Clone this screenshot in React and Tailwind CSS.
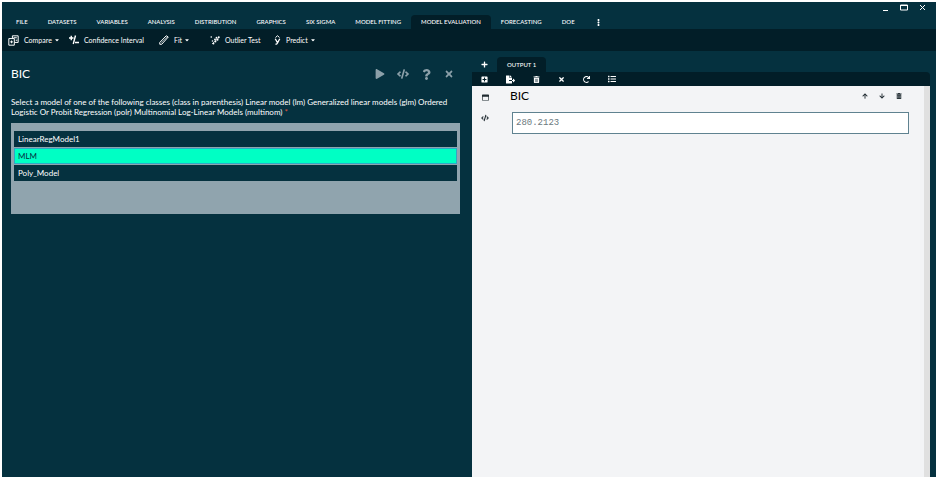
import React, { useState } from 'react';
import {
  FaPlay,
  FaCode,
  FaQuestion,
  FaTimes,
  FaPlus,
  FaPlusSquare,
  FaFileExport,
  FaTrashAlt,
  FaRedo,
  FaList,
  FaRegWindowMaximize,
  FaArrowUp,
  FaArrowDown,
  FaEllipsisV,
  FaCaretDown,
} from 'react-icons/fa';

const menus = [
  'FILE',
  'DATASETS',
  'VARIABLES',
  'ANALYSIS',
  'DISTRIBUTION',
  'GRAPHICS',
  'SIX SIGMA',
  'MODEL FITTING',
  'MODEL EVALUATION',
  'FORECASTING',
  'DOE',
];

const models = ['LinearRegModel1', 'MLM', 'Poly_Model'];

const CompareIcon = () => (
  <svg viewBox="0 0 20 20" className="size-[11px]" fill="none" stroke="currentColor" strokeWidth="1.8">
    <path d="M8 6V1.5h10.5v12H12" />
    <path d="M1.5 6.5h10v12h-10z" />
    <path d="M4 12.5h5M6.5 10v5M10 5h6M14 9.5h3" />
  </svg>
);

const IntervalIcon = () => (
  <svg viewBox="0 0 20 20" className="size-[10px]" fill="none" stroke="currentColor" strokeWidth="2.8">
    <path d="M0 6h9M4.5 1.5v9M13 1L8.5 18M12 15h8" />
  </svg>
);

const FitIcon = () => (
  <svg viewBox="0 0 20 20" className="size-[10px]" fill="none" stroke="currentColor" strokeWidth="2">
    <path d="M1.5 15L14.500 1.500 18.500 4 5.500 18.500H1.500z" />
    <path d="M4.500 15.500L16 4" strokeWidth="1" />
  </svg>
);

const OutlierIcon = () => (
  <svg viewBox="0 0 20 20" className="size-[10px]" fill="currentColor">
    <circle cx="2.5" cy="4" r="1.6" />
    <circle cx="10" cy="9" r="1.8" />
    <circle cx="13" cy="5.5" r="1.8" />
    <circle cx="17.500" cy="4.500" r="2" />
    <circle cx="15" cy="9.500" r="2" />
    <circle cx="11" cy="13" r="1.800" />
    <circle cx="5" cy="12" r="1.600" />
    <circle cx="7" cy="17" r="1.800" />
    <path d="M4 18L18 5" stroke="currentColor" strokeWidth="1.500" />
  </svg>
);

const PredictIcon = () => (
  <svg viewBox="0 0 14 20" className="h-[10px] w-[7px]" fill="none" stroke="currentColor" strokeWidth="2.6">
    <path d="M3 5l4-3.500L11 5" strokeWidth="2" />
    <path d="M2.500 7.500l4.500 8M11.500 7.500L7 16q-1 2.500-4 2.500" />
  </svg>
);

const tools = [
  { label: 'Compare', icon: CompareIcon, menu: true },
  { label: 'Confidence Interval', icon: IntervalIcon },
  { label: 'Fit', icon: FitIcon, menu: true },
  { label: 'Outlier Test', icon: OutlierIcon },
  { label: 'Predict', icon: PredictIcon, menu: true },
];

function TitleBar() {
  return (
    <div className="flex h-[13px] items-start justify-end gap-[11px] pt-[2px] pr-[10px] text-white">
      <button aria-label="Minimize">
        <svg viewBox="0 0 7 7" className="size-[7px]"><path d="M1 6.5h5" stroke="currentColor" /></svg>
      </button>
      <button aria-label="Maximize">
        <svg viewBox="0 0 8 7" className="h-[7px] w-[8px]" fill="none" stroke="currentColor">
          <path d="M.5 1h7v5h-7zM.5 1.5h7" />
        </svg>
      </button>
      <button aria-label="Close">
        <svg viewBox="0 0 7 7" className="size-[7px]" stroke="currentColor"><path d="M1 1l5 5M6 1L1 6" /></svg>
      </button>
    </div>
  );
}

function App() {
  const [activeMenu, setActiveMenu] = useState('MODEL EVALUATION');
  const [selected, setSelected] = useState('MLM');

  return (
    <div className="flex min-h-screen flex-col bg-white p-[2px] font-['Lato',sans-serif]">
      <div className="flex grow flex-col bg-[#05313f] text-white">
        <TitleBar />
        <nav className="flex h-[14px] pl-[4px] text-[6px] leading-[14px] font-medium">
          {menus.map((menu) => (
            <button
              key={menu}
              onClick={() => setActiveMenu(menu)}
              className={`rounded-t-sm px-[10px] whitespace-nowrap ${menu === activeMenu ? 'bg-[#021e28]' : ''}`}
            >
              {menu}
            </button>
          ))}
          <button aria-label="More menus" className="px-[10px]">
            <FaEllipsisV className="size-[7px]" />
          </button>
        </nav>

        <div className="grid h-[22px] grid-cols-[61px_90px_51px_64px_auto] items-center bg-[#021e28] pl-[6px] text-[7px]">
          {tools.map(({ label, icon: Icon, menu }) => (
            <button key={label} className="flex items-center gap-[5px] whitespace-nowrap">
              <Icon />
              <span className="flex items-center gap-[2px]">
                {label}
                {menu && <FaCaretDown className="size-[6px]" />}
              </span>
            </button>
          ))}
        </div>

        <main className="grid grow grid-cols-2">
          <section className="px-[9px]">
            <div className="flex h-[46px] items-center justify-between pr-[6px]">
              <h1 className="text-[12px]">BIC</h1>
              <div className="flex items-center gap-[12px] text-[#8ca0a9]">
                <button aria-label="Run"><FaPlay className="size-[10px]" /></button>
                <button aria-label="Show code"><FaCode className="size-[12px]" /></button>
                <button aria-label="Help"><FaQuestion className="size-[11px]" /></button>
                <button aria-label="Close"><FaTimes className="size-[10px]" /></button>
              </div>
            </div>
            <p id="models-label" className="text-[8px] leading-[10px]">
              Select a model of one of the following classes (class in parenthesis) Linear model (lm) Generalized linear
              models (glm) Ordered Logistic Or Probit Regression (polr) Multinomial Log-Linear Models (multinom)
              <span className="ml-[2px] text-[#e2543c]">*</span>
            </p>
            <div
              role="listbox"
              aria-labelledby="models-label"
              className="mt-[6px] flex h-[91px] flex-col gap-px bg-[#90a4ae] px-[3px] pt-[8px] text-[8px]"
            >
              {models.map((model) => (
                <button
                  key={model}
                  role="option"
                  aria-selected={model === selected}
                  onClick={() => setSelected(model)}
                  className={`h-[16px] border px-[3px] text-left leading-[14px] ${
                    model === selected
                      ? 'border-[#2fa8c4] bg-[#00ffc4] text-[#05313f]'
                      : 'border-[#05313f] bg-[#05313f]'
                  }`}
                >
                  {model}
                </button>
              ))}
            </div>
          </section>

          <section className="flex flex-col pt-[6px] pr-[6px] pl-[3px]">
            <div className="flex h-[15px] items-stretch text-[6px] font-medium">
              <button aria-label="Add output" className="px-[9px]"><FaPlus className="size-[7px]" /></button>
              <button className="rounded-t-sm bg-[#021e28] px-[10px]">OUTPUT 1</button>
            </div>
            <div className="flex h-[14px] items-center gap-[18px] rounded-tr-sm bg-[#021e28] pl-[9px]">
              <button aria-label="New cell"><FaPlusSquare className="size-[7px]" /></button>
              <button aria-label="Export"><FaFileExport className="size-[9px]" /></button>
              <button aria-label="Delete"><FaTrashAlt className="size-[7px]" /></button>
              <button aria-label="Clear"><FaTimes className="size-[7px]" /></button>
              <button aria-label="Refresh"><FaRedo className="size-[7px]" /></button>
              <button aria-label="Contents"><FaList className="size-[8px]" /></button>
            </div>
            <div className="flex grow border-r-[6px] border-[#e0e0e0] bg-[#f3f4f6] text-[#1f2a30]">
              <div className="flex w-[26px] flex-col items-center gap-[13px] pt-[8px]">
                <button aria-label="Collapse"><FaRegWindowMaximize className="size-[7px]" /></button>
                <button aria-label="Show code"><FaCode className="size-[8px]" /></button>
              </div>
              <div className="grow pr-[15px] pl-[12px]">
                <div className="flex h-[20px] items-center justify-between pr-[7px]">
                  <h2 className="text-[12px] text-black">BIC</h2>
                  <div className="flex items-center gap-[11px]">
                    <button aria-label="Move up"><FaArrowUp className="size-[6px]" /></button>
                    <button aria-label="Move down"><FaArrowDown className="size-[6px]" /></button>
                    <button aria-label="Delete cell"><FaTrashAlt className="size-[6px]" /></button>
                  </div>
                </div>
                <output className="mt-[6px] ml-[2px] block h-[22px] border border-[#5f8290] bg-white px-[3px] font-['Liberation_Mono',monospace] text-[9px] leading-[20px] text-[#6b787e]">
                  280.2123
                </output>
              </div>
            </div>
          </section>
        </main>
      </div>
    </div>
  );
}

export default App;
